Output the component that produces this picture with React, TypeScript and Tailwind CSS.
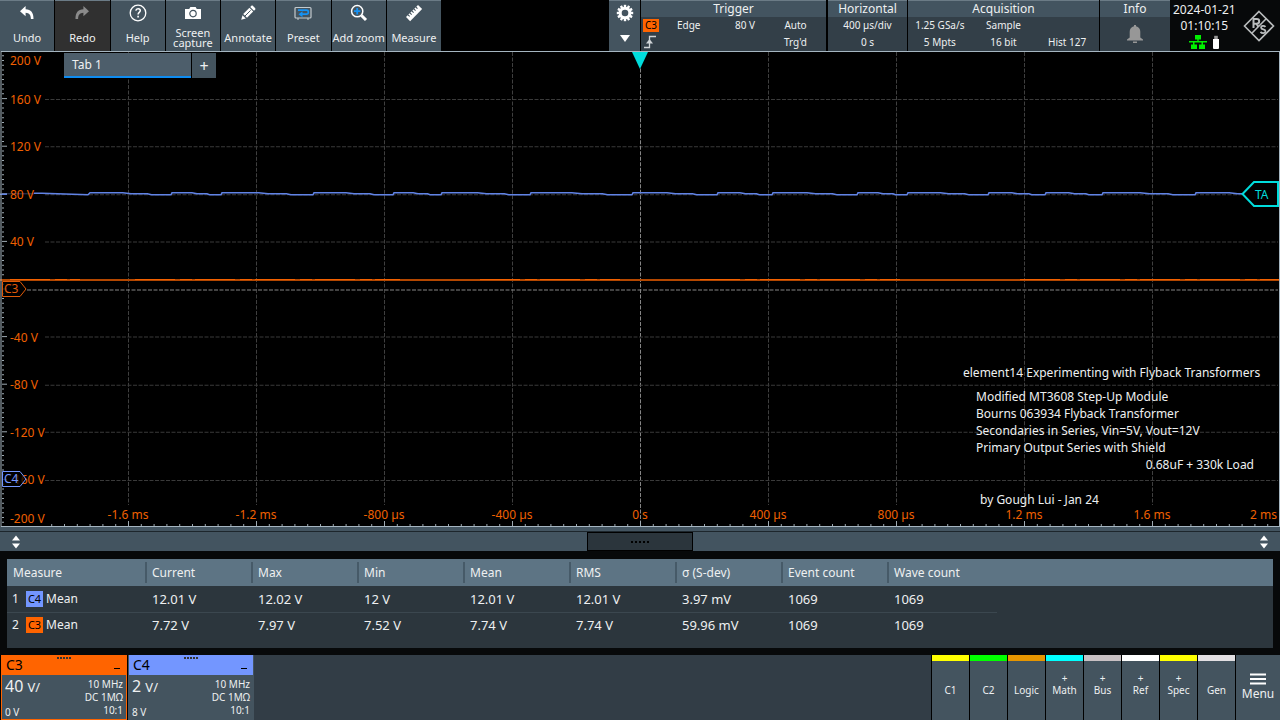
import React from "react";

const tools = [
  { label: "Undo", icon: "undo" },
  { label: "Redo", icon: "redo", disabled: true },
  { label: "Help", icon: "help" },
  { label: "Screen capture", icon: "camera" },
  { label: "Annotate", icon: "pencil" },
  { label: "Preset", icon: "preset" },
  { label: "Add zoom", icon: "zoom" },
  { label: "Measure", icon: "ruler" },
];

const voltLabels = [
  { text: "160 V", pos: 10 },
  { text: "120 V", pos: 20 },
  { text: "80 V", pos: 30 },
  { text: "40 V", pos: 40 },
  { text: "-40 V", pos: 60 },
  { text: "-80 V", pos: 70 },
  { text: "-120 V", pos: 80 },
  { text: "-160 V", pos: 90 },
];

const timeLabels = [
  { text: "-1.6 ms", pos: 10 },
  { text: "-1.2 ms", pos: 20 },
  { text: "-800 µs", pos: 30 },
  { text: "-400 µs", pos: 40 },
  { text: "0 s", pos: 50 },
  { text: "400 µs", pos: 60 },
  { text: "800 µs", pos: 70 },
  { text: "1.2 ms", pos: 80 },
  { text: "1.6 ms", pos: 90 },
];

const columns = ["Current", "Max", "Min", "Mean", "RMS", "σ (S-dev)", "Event count", "Wave count"];

const rows = [
  {
    channel: "C4",
    badge: "bg-[#7396ff]",
    line: "border-b border-[#3b474f]",
    values: ["12.01 V", "12.02 V", "12 V", "12.01 V", "12.01 V", "3.97 mV", "1069", "1069"],
  },
  {
    channel: "C3",
    badge: "bg-[#ff6400]",
    line: "",
    values: ["7.72 V", "7.97 V", "7.52 V", "7.74 V", "7.74 V", "59.96 mV", "1069", "1069"],
  },
];

const sources = [
  { label: "C1", color: "bg-[#ffff00]" },
  { label: "C2", color: "bg-[#00ff00]" },
  { label: "Logic", color: "bg-[#e69500]" },
  { label: "Math", color: "bg-[#00ffff]", add: true },
  { label: "Bus", color: "bg-[#c8c0c3]", add: true },
  { label: "Ref", color: "bg-white", add: true },
  { label: "Spec", color: "bg-[#ffff00]", add: true },
  { label: "Gen", color: "bg-[#e2dfe2]" },
];

// x positions where the converter switches and C4 jumps back up
const steps = [90, 172, 222, 314, 394, 442, 531, 633, 718, 773, 858, 908, 989, 1046, 1103, 1196];

function c4Path() {
  let d = "M0 143H7M34 142H42L88 143.5";
  steps.forEach((x, i) => {
    const end = i + 1 < steps.length ? steps[i + 1] : 1279;
    const len = end - x;
    d += ` L${x} 141.5 H${x + len * 0.4} L${x + len * 0.5} 142.5 H${end - len * 0.3} L${end - len * 0.25} 143.5 H${end - 1}`;
  });
  return d;
}

function ToolIcon({ name }: { name: string }) {
  if (name === "undo" || name === "redo") {
    return (
      <svg
        viewBox="0 0 16 16"
        className={name === "redo" ? "h-4 w-4 -scale-x-100 fill-[#8a8a8a]" : "h-4 w-4 fill-white"}
      >
        <path d="M1 6.2 6.6 1v3.2c5.4.2 8 3.4 7.9 9.8h-2.600c0-4-1.600-6.200-5.300-6.300v3.600Z" />
      </svg>
    );
  }
  if (name === "help") {
    return (
      <svg viewBox="0 0 18 18" className="h-[18px] w-[18px] fill-none stroke-white">
        <circle cx="9" cy="9" r="7.8" strokeWidth="1.3" />
        <path d="M6.8 6.6C7 5.3 8 4.7 9.1 4.7c1.3 0 2.2.8 2.2 1.9 0 1.7-2.2 1.8-2.2 3.8" strokeWidth="1.5" />
        <path d="M9.1 11.8v1.6" strokeWidth="1.6" />
      </svg>
    );
  }
  if (name === "camera") {
    return (
      <svg viewBox="0 0 18 14" className="h-[14px] w-[18px]">
        <path d="M1 3h4.2l1.2-2h5.2l1.2 2H17v10H1Z" fill="#fff" />
        <circle cx="9" cy="7.6" r="3.2" fill="none" stroke="#44545f" strokeWidth="1.2" />
      </svg>
    );
  }
  if (name === "pencil") {
    return (
      <svg viewBox="0 0 16 16" className="h-4 w-4 fill-white">
        <path d="m1.2 14.8 1.3-4.6 3.3 3.3Z" />
        <path d="M3.2 9 9.4 2.8l3.8 3.8L7 12.8Z" />
        <path d="m10.2 2 1-1c.6-.6 1.3-.5 1.8 0l2 2c.5.5.6 1.2 0 1.8l-1 1Z" />
        <path d="m5 11 5.6-5.6" stroke="#44545f" strokeWidth="1" />
      </svg>
    );
  }
  if (name === "preset") {
    return (
      <svg viewBox="0 0 18 14" className="h-[14px] w-[18px] fill-none">
        <rect x="1" y="1.5" width="16" height="10.5" rx="1" stroke="#c3cace" strokeWidth="1.2" />
        <path d="M3 13h2M13 13h2" stroke="#c3cace" />
        <path d="M4 4.2h8.5q1.8 0 1.8 1.6v.8q0 1.6-1.8 1.6H7" stroke="#1492f5" strokeWidth="1.7" />
        <path d="M8.5 5.2v6L4.5 8.2Z" fill="#1492f5" />
      </svg>
    );
  }
  if (name === "zoom") {
    return (
      <svg viewBox="0 0 18 18" className="h-[18px] w-[18px] fill-none">
        <circle cx="7.2" cy="7.2" r="5.6" stroke="#fff" strokeWidth="1.5" />
        <path d="m11.5 11.5 4.5 4.5" stroke="#fff" strokeWidth="3" />
        <path d="M7.2 4v6.4M4 7.2h6.4" stroke="#1492f5" strokeWidth="1.8" />
      </svg>
    );
  }
  return (
    <svg viewBox="0 0 18 18" className="h-[18px] w-[18px]">
      <g transform="rotate(-45 9 9)">
        <rect x="0.5" y="6.2" width="17" height="5.8" fill="#fff" />
        <path d="M3.5 6v2.4M6.25 6v2.4M9 6v2.4M11.75 6v2.4M14.5 6v2.4" stroke="#44545f" strokeWidth="1.1" />
      </g>
    </svg>
  );
}

function Gear() {
  const teeth = [0, 30, 60, 90, 120, 150];
  return (
    <svg viewBox="0 0 18 18" className="h-[18px] w-[18px]">
      {teeth.map((a) => (
        <rect key={a} x="7.8" y="0.8" width="2.4" height="16.4" fill="#fff" transform={`rotate(${a} 9 9)`} />
      ))}
      <circle cx="9" cy="9" r="6.3" fill="#fff" />
      <circle cx="9" cy="9" r="3.3" fill="#44545f" />
    </svg>
  );
}

function Panel({ title, className, children }: { title: string; className: string; children: React.ReactNode }) {
  return (
    <section className={`flex flex-col ${className}`}>
      <h2 className="h-[17px] border-t border-[#6b7b86] bg-[#435460] text-center text-[12px] leading-4">{title}</h2>
      <div className="flex-1 bg-[#333f48] text-[10px] leading-[17px]">{children}</div>
    </section>
  );
}

function Header() {
  return (
    <header className="flex h-[51px] shrink-0 bg-black">
      <nav className="grid w-[441px] shrink-0 grid-cols-8 gap-px">
        {tools.map((tool) => (
          <button
            key={tool.label}
            disabled={tool.disabled}
            className={`flex flex-col items-center border-t border-[#6b7b86] ${
              tool.disabled ? "bg-[#303030]" : "bg-[#44545f]"
            }`}
          >
            <span className="flex h-6 items-center">
              <ToolIcon name={tool.icon} />
            </span>
            <span className="flex h-[26px] items-center text-[11px] leading-[10px]">{tool.label}</span>
          </button>
        ))}
      </nav>
      <div className="flex-1" />
      <div className="flex shrink-0 gap-px">
        <button
          aria-label="Settings"
          className="flex w-[31px] flex-col items-center justify-between border-t border-[#6b7b86] bg-[#44545f] pt-[3px] pb-[9px]"
        >
          <Gear />
          <svg viewBox="0 0 10 7" className="h-[7px] w-[10px] fill-white">
            <path d="M0 0h10L5 7Z" />
          </svg>
        </button>
        <Panel title="Trigger" className="w-[185px]">
          <div className="grid grid-cols-[34px_48px_40px_1fr] pl-[2px]">
            <span className="my-[2px] h-[13px] w-4 bg-[#ff6400] text-center leading-[13px] text-black">C3</span>
            <span>Edge</span>
            <span className="text-center">80 V</span>
            <span className="text-center">Auto</span>
            <svg viewBox="0 0 14 14" className="mt-px h-[14px] w-[14px] fill-none stroke-[#d0d4d7]">
              <path d="M1 12.5h5.5V1.5H13" strokeWidth="1.3" />
              <path d="M3 8.5 6.5 4l3.5 4.5Z" fill="#d0d4d7" strokeWidth="0" />
            </svg>
            <span className="col-start-4 text-center">Trg'd</span>
          </div>
        </Panel>
        <Panel title="Horizontal" className="ml-px w-[79px]">
          <div className="text-center">
            <p>400 µs/div</p>
            <p>0 s</p>
          </div>
        </Panel>
        <Panel title="Acquisition" className="w-[191px]">
          <div className="grid grid-cols-3 text-center">
            <span>1.25 GSa/s</span>
            <span>Sample</span>
            <span />
            <span>5 Mpts</span>
            <span>16 bit</span>
            <span>Hist 127</span>
          </div>
        </Panel>
        <Panel title="Info" className="w-[70px]">
          <div className="flex h-full items-center justify-center">
            <svg viewBox="0 0 18 20" className="h-5 w-[18px] fill-[#979797]">
              <path d="M8 1h2v1.2c2.8.6 4.3 2.6 4.3 5.6v5.700L17 15.5v1H1v-1l2.700-2V7.8c0-3 1.5-5 4.3-5.6Z" />
              <path d="M7 17.5h4v1.5H7Z" />
            </svg>
          </div>
        </Panel>
      </div>
      <div className="flex w-[110px] shrink-0 items-center justify-between bg-[#07090a] pr-1 pl-[3px]">
        <div className="flex flex-col items-center text-[12px] leading-4">
          <time>2024-01-21</time>
          <time>01:10:15</time>
          <div className="flex h-4 items-center gap-1">
            <svg viewBox="0 0 20 14" className="h-[14px] w-5 fill-[#00f000]">
              <path d="M7 0h6v4.5h-2.3v1.6H19v1.3h-4v2h2V14h-6V9.4h2.5v-2h-7v2H9V14H3V9.4h2v-2H1V6.100h8.3V4.5H7Z" />
            </svg>
            <svg viewBox="0 0 8 14" className="h-[14px] w-2">
              <path d="M1 4h6v9q0 1-1 1H2q-1 0-1-1Z" fill="#fff" />
              <path d="M2.2.8h3.6V4H2.2Z" fill="#999" />
            </svg>
          </div>
        </div>
        <svg viewBox="0 0 34 34" className="h-[34px] w-[34px] fill-none stroke-[#b9bcbd]">
          <path d="M17 2.5 31.5 17 17 31.5 2.5 17Z" strokeWidth="1.6" />
          <path d="M9.8 24.2 24.2 9.800" strokeWidth="1.6" />
          <path d="M11.5 19V10h3.300q2.400 0 2.400 2.300t-2.400 2.400H11.500M14.500 14.700l1.800 3" strokeWidth="2" />
          <path
            d="M23.500 17.800q-1-1.100-2.600-1-1.900.2-1.800 1.800.1 1.300 2.200 1.700 2.200.500 2.100 2.100-.2 1.700-2.300 1.700-1.700 0-2.600-1.200"
            strokeWidth="1.8"
          />
        </svg>
      </div>
    </header>
  );
}

function Graticule() {
  const divs = [1, 2, 3, 4, 5, 6, 7, 8, 9];
  return (
    <svg viewBox="0 0 1280 475" preserveAspectRatio="none" className="absolute inset-0 h-full w-full fill-none">
      {divs.map((i) => (
        <g key={i} strokeDasharray="4 1.5">
          <path d={`M${i * 128 + 0.5} 1V${i === 5 ? 470 : 453}`} stroke={i === 5 ? "#858585" : "#3f3f3f"} />
          <path d={`M${i === 5 ? 27 : 45} ${Math.round(i * 47.5) + 0.5}H1278`} stroke={i === 5 ? "#858585" : "#3a3a3a"} />
        </g>
      ))}
      {/* minor and major ticks along the frame */}
      <g stroke="#9fabb3">
        {Array.from({ length: 99 }, (_, i) => (
          <path key={i} d={`M2 ${(i + 1) * 4.75}h${(i + 1) % 10 === 0 ? 5 : 2}`} />
        ))}
        {Array.from({ length: 96 }, (_, i) => (
          <path key={i} d={`M${(i + 4) * 12.8 + 0.5} 474v${(i + 4) % 10 === 0 ? -5 : -2}`} />
        ))}
      </g>
      <path d="M7 142.500H34" stroke="#2c3a66" />
      <path d={c4Path()} stroke="#6183e6" strokeWidth="1.5" />
      <path d="M0 228.5H1279" stroke="#b34700" strokeWidth="2" />
      <path d="M10 228H80M135 228H400M480 228H620M700 228H900M1020 228H1279" stroke="#f26100" strokeDasharray="40 5 12 3" />
      <rect x="1" y="0.5" width="1278.5" height="474" stroke="#a5b5c0" />
    </svg>
  );
}

function ChannelMarker({ name, color, pos }: { name: string; color: string; pos: number }) {
  return (
    <div className={`absolute left-[2px] h-4 w-[26px] -translate-y-1/2 ${color}`} style={{ top: `${pos}%` }}>
      <svg viewBox="0 0 26 16" className="absolute inset-0 h-full w-full">
        <path d="M.5.5H18L24 8l-6 7.500H.5Z" fill="#000" fillOpacity="0.75" stroke="currentColor" />
      </svg>
      <span className="relative block pl-[2px] text-[12px] leading-4">{name}</span>
    </div>
  );
}

function Scope() {
  return (
    <main className="relative min-h-[300px] flex-1 overflow-hidden bg-black text-[12px] leading-4">
      <Graticule />
      <div className="text-[#f06000]">
        <span className="absolute top-[2px] left-[10px]">200 V</span>
        {voltLabels.map((l) => (
          <span key={l.text} className="absolute left-[10px] mt-px -translate-y-1/2" style={{ top: `${l.pos}%` }}>
            {l.text}
          </span>
        ))}
        <span className="absolute bottom-0 left-[10px]">-200 V</span>
        {timeLabels.map((l) => (
          <span key={l.text} className="absolute bottom-1 -translate-x-1/2" style={{ left: `${l.pos}%` }}>
            {l.text}
          </span>
        ))}
        <span className="absolute right-[3px] bottom-1">2 ms</span>
      </div>
      <ChannelMarker name="C3" color="text-[#e05a08]" pos={50} />
      <ChannelMarker name="C4" color="text-[#7396ff]" pos={90} />

      <svg viewBox="0 0 16 17" className="absolute top-px left-1/2 h-[17px] w-4 -translate-x-1/2 fill-[#00dcdc]">
        <path d="M0 0h16L8 17Z" />
      </svg>
      <div className="absolute top-[30%] right-px h-[26px] w-[38px] -translate-y-1/2 text-[#00dcdc]">
        <svg viewBox="0 0 38 26" className="absolute inset-0 h-full w-full">
          <path d="M1.5 13 13 1h24v24H13Z" fill="#000" stroke="currentColor" strokeWidth="2" />
        </svg>
        <span className="relative block pl-[14px] leading-[28px]">TA</span>
      </div>

      <div className="absolute top-[2px] left-16 flex h-[25px] w-[152px] gap-px">
        <button className="flex-1 border-b-2 border-[#0f8cf0] bg-[#4d5e6b] pl-2 text-left text-[12px] leading-[23px]">
          Tab 1
        </button>
        <button className="w-6 bg-[#44545f] text-[16px]" aria-label="Add tab">
          +
        </button>
      </div>

      <div className="absolute right-3 bottom-[19px] w-[305px] leading-[17px] whitespace-nowrap">
        <p className="mb-[7px]">element14 Experimenting with Flyback Transformers</p>
        <div className="pl-[13px]">
          <p>Modified MT3608 Step-Up Module</p>
          <p>Bourns 063934 Flyback Transformer</p>
          <p>Secondaries in Series, Vin=5V, Vout=12V</p>
          <p>Primary Output Series with Shield</p>
        </div>
        <p className="mb-[18px] pr-[14px] text-right">0.68uF + 330k Load</p>
        <p className="pl-[17px]">by Gough Lui - Jan 24</p>
      </div>
    </main>
  );
}

function UpDown() {
  return (
    <svg viewBox="0 0 8 14" className="h-[14px] w-2 fill-white">
      <path d="M0 5.5h8L4 .5ZM0 8.5h8l-4 5Z" />
    </svg>
  );
}

function Splitter() {
  return (
    <div className="border-t-4 border-[#435460] bg-[#435460]">
      <div className="grid h-5 grid-cols-[1fr_106px_1fr] items-center border-t border-[#1d262c] px-3">
        <UpDown />
        <button aria-label="Resize" className="flex h-full items-center justify-center gap-px border border-black bg-[#2b353c]">
          {[0, 1, 2, 3, 4].map((i) => (
            <span key={i} className="mr-px h-[2px] w-[2px] bg-black" />
          ))}
        </button>
        <span className="justify-self-end">
          <UpDown />
        </span>
      </div>
    </div>
  );
}

function Measurements() {
  return (
    <div className="bg-[#07090a] px-[7px] pt-2 pb-[7px]">
      <div className="bg-[#2c363d] pb-[10px]">
        <table className="w-full table-fixed border-collapse text-left text-[12px]">
          <colgroup>
            <col className="w-[138px]" />
            {columns.slice(1).map((c) => (
              <col key={c} className="w-[106px]" />
            ))}
            <col className="w-[110px]" />
            <col />
          </colgroup>
          <thead>
            <tr className="h-[27px] bg-[#5d7484]">
              <th className="pl-[6px] font-normal">Measure</th>
              {columns.map((c) => (
                <th key={c} className="p-0 font-normal">
                  <span className="block border-l-2 border-[#465a68] pl-[5px] leading-[21px]">{c}</span>
                </th>
              ))}
              <td />
            </tr>
          </thead>
          <tbody>
            {rows.map((row, i) => (
              <tr key={row.channel} className="h-[26px]">
                <td className={`py-0 pl-[5px] ${row.line}`}>
                  <span className="flex items-center leading-5">
                    <span className="w-[14px]">{i + 1}</span>
                    <span className={`mr-[3px] h-4 w-[17px] text-center text-[11px] leading-4 text-black ${row.badge}`}>
                      {row.channel}
                    </span>
                    Mean
                  </span>
                </td>
                {row.values.map((v, j) => (
                  <td key={j} className={`py-0 pl-[7px] text-[13px] leading-5 ${row.line}`}>
                    {v}
                  </td>
                ))}
                <td />
              </tr>
            ))}
          </tbody>
        </table>
      </div>
    </div>
  );
}

type ChannelProps = { name: string; scale: string; offset: string; head: string; border: string };

function ChannelCard({ name, scale, offset, head, border }: ChannelProps) {
  return (
    <button className={`flex w-[126px] flex-col border-x border-b bg-[#44545f] text-left ${border}`}>
      <span className={`grid h-5 w-full grid-cols-3 px-1 text-black ${head}`}>
        <span className="text-[14px] leading-5">{name}</span>
        <span className="mt-[2px] flex justify-center gap-px">
          {[0, 1, 2, 3, 4].map((i) => (
            <span key={i} className="h-[2px] w-[2px] bg-[#333]" />
          ))}
        </span>
        <span className="mt-[13px] mr-[2px] h-px w-[6px] justify-self-end bg-black" />
      </span>
      <span className="flex w-full flex-1 justify-between px-[3px] pt-[3px]">
        <span className="flex flex-col justify-between">
          <span className="text-[16px] leading-[17px]">
            {scale} <span className="text-[13px]">V/</span>
          </span>
          <span className="text-[10px] leading-[13px]">{offset}</span>
        </span>
        <span className="text-right text-[10px] leading-[13px]">
          10 MHz
          <br />
          DC 1MΩ
          <br />
          10:1
        </span>
      </span>
    </button>
  );
}

function Footer() {
  return (
    <footer className="flex h-[65px] shrink-0 bg-[#323d46]">
      <div className="flex gap-px bg-black pl-px">
        <ChannelCard name="C3" scale="40" offset="0 V" head="bg-[#ff6400]" border="border-[#ff6400]" />
        <ChannelCard name="C4" scale="2" offset="8 V" head="bg-[#7396ff]" border="border-[#44545f]" />
      </div>
      <div className="flex-1" />
      <div className="flex gap-px bg-black pl-px">
        {sources.map((s) => (
          <button key={s.label} className="flex w-[37px] flex-col items-center bg-[#44545f] text-[10px] leading-[13px]">
            <span className={`h-[6px] w-full ${s.color}`} />
            <span className="mt-[11px] h-3">{s.add ? "+" : ""}</span>
            <span>{s.label}</span>
          </button>
        ))}
        <button className="flex w-11 flex-col items-center bg-[#44545f] pt-[18px] text-[12px] leading-4">
          <svg viewBox="0 0 16 12" className="mb-px h-3 w-4 stroke-white">
            <path d="M0 1.5h16M0 6h16M0 10.5h16" strokeWidth="2" />
          </svg>
          Menu
        </button>
      </div>
    </footer>
  );
}

function App() {
  return (
    <div className="flex min-h-screen flex-col bg-black font-['Noto_Sans',sans-serif] text-[#eef0f1]">
      <Header />
      <Scope />
      <Splitter />
      <Measurements />
      <Footer />
    </div>
  );
}

export default App;
